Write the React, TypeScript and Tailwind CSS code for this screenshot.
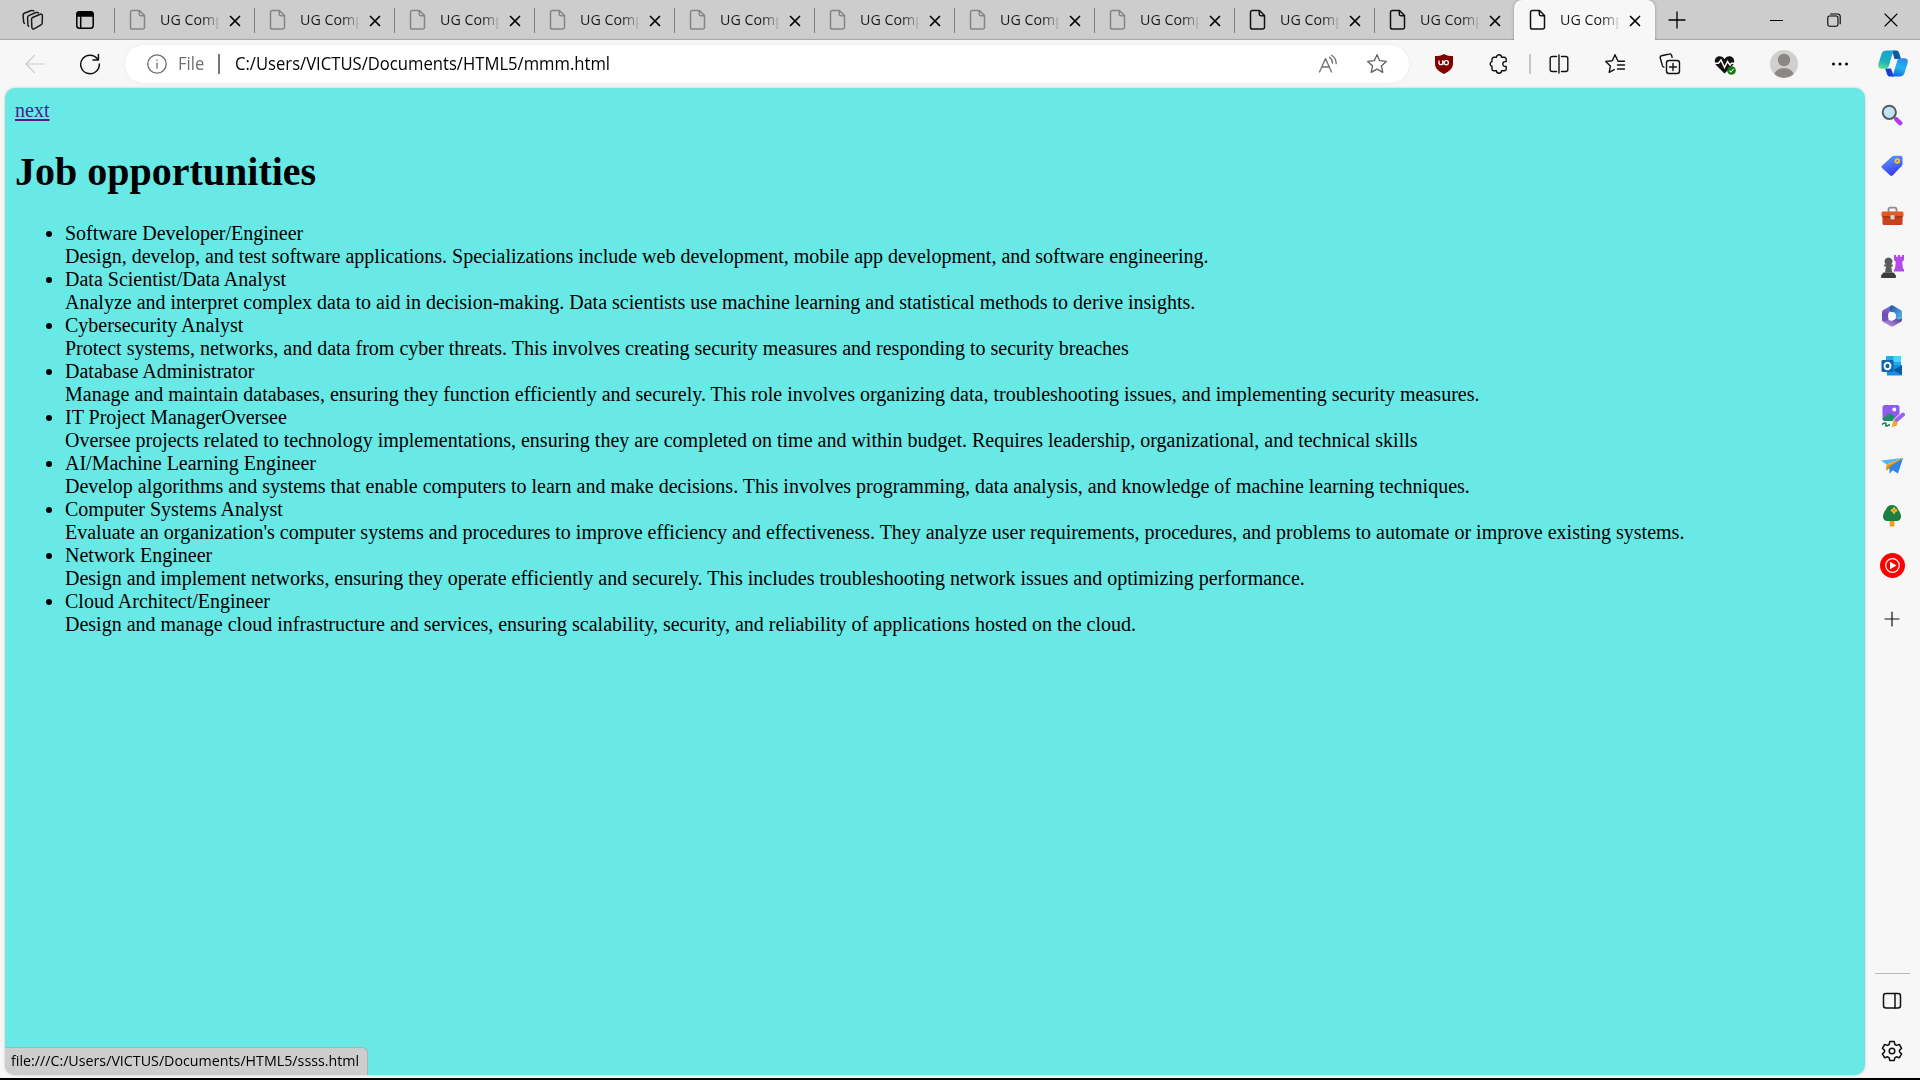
import React from "react";

const UI = "font-['Open_Sans','Noto_Sans',sans-serif]";

type IconProps = { w?: number; h?: number; className?: string; sw?: number; box?: string; children: React.ReactNode };

function Line({ w = 24, h = 24, className = "", sw = 1.3, box, children }: IconProps) {
  return (
    <svg width={w} height={h} viewBox={box ?? `0 0 ${w} ${h}`} fill="none" stroke="currentColor" strokeWidth={sw} strokeLinecap="round" strokeLinejoin="round" className={`shrink-0 ${className}`}>
      {children}
    </svg>
  );
}

function Art({ w = 24, h = 24, className = "", box, children }: IconProps) {
  return (
    <svg width={w} height={h} viewBox={box ?? `0 0 ${w} ${h}`} className={`shrink-0 ${className}`}>
      {children}
    </svg>
  );
}

function PageIcon({ className = "" }: { className?: string }) {
  return (
    <Line w={18} h={22} sw={1.5} className={className}>
      <path d="M3.5 1.5h7l5 5v11.7a1.8 1.8 0 0 1-1.8 1.8H3.3a1.8 1.8 0 0 1-1.8-1.8V3.3a1.8 1.8 0 0 1 1.8-1.8zM10.3 1.7v3.6a1.4 1.4 0 0 0 1.4 1.4h3.7" />
    </Line>
  );
}

function Tab({ tone, active = false }: { tone: string; active?: boolean }) {
  return (
    <div className={`flex h-10 shrink-0 items-center ${active ? "relative z-10 w-[141px] rounded-t-lg bg-[#f7f7f7] shadow-[0_0_3px_rgba(0,0,0,0.3)] [clip-path:inset(-4px_-4px_0_-4px)]" : "w-[140px]"}`}>
      <div className={`h-[25px] w-px ${active ? "" : "bg-[#7d7d7d]"}`} />
      <PageIcon className={`ml-[14px] ${tone}`} />
      <div className="mb-[2px] ml-[13px] w-[59px] text-[15px] leading-5 whitespace-nowrap text-[#1b1b1b] [mask-image:linear-gradient(to_right,black_42px,transparent_61px)]">
        <span className="inline-block origin-left scale-x-[0.95]">UG Comp</span>
      </div>
      <Line w={12} h={12} sw={1.7} className="ml-[10px] mt-[1px] text-black">
        <path d="M1.5 1.5l9 9M10.5 1.5l-9 9" />
      </Line>
    </div>
  );
}

function Cell({ w, children }: { w: string; children?: React.ReactNode }) {
  return <div className={`flex h-full shrink-0 items-center justify-center ${w}`}>{children}</div>;
}

function TabStrip() {
  const tones = Array.from({ length: 10 }, (_, i) => (i < 8 ? "text-[#858585]" : "text-[#111111]"));
  return (
    <div className="flex h-10 items-center bg-[#cdcdcd] shadow-[inset_0_-2px_1px_-1px_rgba(0,0,0,0.2)]">
      <Cell w="w-[65px]">
        <Line w={22} h={22} sw={1.5} className="text-[#1b1b1b]">
          <path d="M10.6 8.5l7.6-3.3a1.5 1.5 0 0 1 2.2 1.4l-.2 7.4a2 2 0 0 1-1.2 1.8l-7 4a1.4 1.4 0 0 1-2.1-1.2l-.4-8a2.3 2.3 0 0 1 1.1-2.1z" />
          <path d="M16.5 3.8l-1.6-.3a3 3 0 0 0-1.8.2L6.8 6.6a2 2 0 0 0-1.2 1.9l.3 7.2a2 2 0 0 0 .8 1.6" />
          <path d="M11.8 1.7l-1.6-.2a3 3 0 0 0-1.6.2L2.3 4.3a2 2 0 0 0-1.2 1.9l.5 6.7a2 2 0 0 0 .9 1.500" />
        </Line>
      </Cell>
      <Cell w="w-[40px]">
        <Line w={18} h={18} sw={1.5} className="text-black">
          <rect x="0.8" y="0.8" width="16.4" height="16.4" rx="2.8" />
          <path d="M1 3.2A2 2 0 0 1 3.2 1h11.6A2 2 0 0 1 17 3.2V5H1z" fill="currentColor" />
          <path d="M4.7 5v12" />
        </Line>
      </Cell>
      <div className="w-[9px]" />
      {tones.map((t, i) => (
        <Tab key={i} tone={t} />
      ))}
      <Tab active tone="text-[#111111]" />
      <Cell w="w-[44px]">
        <Line w={18} h={18} sw={1.3} className="text-black"><path d="M9 1v16M1 9h16" /></Line>
      </Cell>
      <div className="grow" />
      <Cell w="w-[57px]"><div className="h-px w-[13px] bg-black" /></Cell>
      <Cell w="w-[57px]">
        <Line w={14} h={14} sw={1.1} className="text-black">
          <rect x="0.8" y="3" width="10.2" height="10.2" rx="1.6" />
          <path d="M3.5 1h7.3a2.4 2.4 0 0 1 2.4 2.4v7.3" />
        </Line>
      </Cell>
      <Cell w="w-[58px]">
        <Line w={14} h={14} sw={1.1} className="text-black"><path d="M1 1l12 12M13 1L1 13" /></Line>
      </Cell>
    </div>
  );
}

const STAR = "M11 1.7l2.7 6 6.6.7-4.9 4.5 1.4 6.5L11 16.1l-5.800 3.300 1.400-6.500L1.700 8.400l6.600-.7z";

function Toolbar() {
  return (
    <div className="flex h-12 items-center text-[#111111]">
      <Cell w="w-[70px]">
        <Line w={20} h={20} sw={1.2} className="text-[#cbcbcb]"><path d="M19 10H1M9.5 1.5L1 10l8.5 8.5" /></Line>
      </Cell>
      <Cell w="w-[40px]">
        <Line w={22} h={22} sw={1.5}><path d="M18.7 6.2A9.3 9.3 0 1 0 20.3 11M19.4 1.5v5.4h-5.4" /></Line>
      </Cell>
      <div className="ml-[15px] flex h-[38px] w-[1284px] shrink-0 items-center rounded-full bg-white shadow-[0_0_4px_rgba(0,0,0,0.06)]">
        <Line w={20} h={20} sw={1.3} className="ml-[22px] text-[#6f6f6f]">
          <circle cx="10" cy="10" r="9.2" />
          <path d="M10 9.2v5M10 6v.3" />
        </Line>
        <span className="mb-px ml-[11px] w-[40px] text-[17.5px] text-[#6f6f6f]"><span className="inline-block origin-left scale-x-[0.95]">File</span></span>
        <div className="h-5 w-[1.5px] bg-[#777777]" />
        <span className="mb-px ml-[15px] whitespace-nowrap text-[17.5px] text-black"><span className="inline-block origin-left scale-x-[0.951]">C:/Users/VICTUS/Documents/HTML5/mmm.html</span></span>
        <div className="grow" />
        <Line w={20} h={20} sw={1.3} className="text-[#707070]">
          <path d="M1.5 18L7.5 4.5 13.5 18M3.800 13h7.400M11.500 3.300a7.500 7.500 0 0 1 3 6M13.500 1.200a10 10 0 0 1 4.700 8.500" />
        </Line>
        <Line w={22} h={22} sw={1.3} className="mr-[21px] ml-[28px] text-[#606060]"><path d={STAR} /></Line>
      </div>
      <Cell w="w-[70px]">
        <Art w={20} h={22}>
          <path d="M10 1C7.5 2.8 4 3 1 3v8c0 4.500 4 7.500 9 10 5-2.500 9-5.500 9-10V3c-3 0-6.500-.2-9-2z" fill="#800000" />
          <path d="M5 7.500v2.300a1.900 1.900 0 0 0 3.800 0V7.500" fill="none" stroke="#fff" strokeWidth="1.3" />
          <path d="M8.800 7.500v4.200" stroke="#fff" strokeWidth="1.3" />
          <circle cx="12.3" cy="9.7" r="2.1" fill="none" stroke="#fff" strokeWidth="1.3" />
        </Art>
      </Cell>
      <Cell w="w-[40px]">
        <Line w={20} h={20} sw={1.4}>
          <path d="M5 3.300h2.500a2.500 2.500 0 0 1 5 0h2.700a2 2 0 0 1 2 2v2.300h-1a2.400 2.400 0 0 0 0 4.800h1v2.400a2 2 0 0 1-2 2h-2.700a2.500 2.500 0 0 1-5 0H5a2 2 0 0 1-2-2v-2.400a2.500 2.500 0 0 1 0-4.800V5.300a2 2 0 0 1 2-2z" />
        </Line>
      </Cell>
      <div className="mx-[10px] h-5 w-[1.5px] bg-[#c8c8c8]" />
      <Cell w="w-[37px]">
        <Line w={20} h={20} sw={1.4}>
          <path d="M7.500 2.500H3.200a2 2 0 0 0-2 2v11a2 2 0 0 0 2 2h4.300M12.500 2.500h4.300a2 2 0 0 1 2 2v11a2 2 0 0 1-2 2h-4.300M10 1v18" />
        </Line>
      </Cell>
      <Cell w="w-[74px]">
        <Line w={22} h={22} sw={1.4}>
          <path d="M20.500 8.300h-6.500L11 1.700 8.300 7.700l-6.600.7 4.700 4.500-1.200 6.500 5-2.800M13.500 12h7M13.500 16h7" />
        </Line>
      </Cell>
      <Cell w="w-[36px]">
        <Line w={22} h={22} sw={1.4}>
          <rect x="7.5" y="7.5" width="13" height="13" rx="2.5" />
          <path d="M14 10.500v7M10.500 14h7M4.800 14.200a2 2 0 0 1-1.300-1.300L1.300 5.200a2 2 0 0 1 1.300-2.500L10.200 1a2 2 0 0 1 2.400 1.300l.5 2" />
        </Line>
      </Cell>
      <Cell w="w-[75px]">
        <Art w={22} h={20} className="mt-[2px]">
          <path d="M10.500 18.500L2 10C-.5 6.500 1 1.200 5.500 1.200c2.500 0 4 1.300 5 3 1-1.700 2.500-3 5-3C20 1.200 21.500 6.500 19 10z" fill="#111" />
          <path d="M0 8.300h4.500L7 5l3.500 7.500 3-6 2.500 3.500 1.500-1.700H22" fill="none" stroke="#f7f7f7" strokeWidth="1.5" />
          <circle cx="17.500" cy="15.500" r="4.300" fill="#107c10" />
          <path d="M15.500 15.700l1.400 1.300 2.700-3" fill="none" stroke="#fff" strokeWidth="1.1" />
        </Art>
      </Cell>
      <Cell w="w-[43px]">
        <Art w={28} h={28}>
          <circle cx="14" cy="14" r="14" fill="#d2d0ce" />
          <circle cx="14" cy="10" r="6.2" fill="#8a8785" />
          <path d="M4.500 24a9.600 7 0 0 1 19 0 14 14 0 0 1-19 0z" fill="#8a8785" />
        </Art>
      </Cell>
      <Cell w="w-[69px]">
        <Art w={18} h={4}>
          <circle cx="2.5" cy="2" r="1.5" /><circle cx="9" cy="2" r="1.5" /><circle cx="15.5" cy="2" r="1.5" />
        </Art>
      </Cell>
      <Cell w="w-[36px]">
        <Art w={30} h={27} className="mb-px">
          <defs>
            <linearGradient id="cpA" x1="0.5" y1="0" x2="0.2" y2="1"><stop offset="0" stopColor="#16a3d6" /><stop offset="0.6" stopColor="#1fb0b8" /><stop offset="1" stopColor="#5fe08a" /></linearGradient>
            <linearGradient id="cpB" x1="0.7" y1="0" x2="0.3" y2="1"><stop offset="0" stopColor="#2c8be8" /><stop offset="0.5" stopColor="#22b4f2" /><stop offset="1" stopColor="#1566e0" /></linearGradient>
          </defs>
          <path d="M14 .5h4c2.500 0 3 1.500 3.700 4L23 9h-6.500z" fill="#0f5a9e" />
          <path d="M7 18.500h6l3 8h-4c-2.500 0-3-2-3.500-4z" fill="#1a3fd0" />
          <path d="M8.500.5h9c-2 .5-2.700 2-3.300 4L11 15.500c-.6 2-1.800 3.200-4 3.200H3.500C.8 18.700-.3 16.800.4 14L3.300 4.500C4 2 5.700.5 8.500.5z" fill="url(#cpA)" />
          <path d="M21.500 26.500h-9c2-.5 2.700-2 3.300-4L19 11.500c.6-2 1.800-3.200 4-3.200h3.500c2.700 0 3.800 1.900 3.100 4.700l-2.900 9.500c-.7 2.500-2.400 4-5.200 4z" fill="url(#cpB)" />
        </Art>
      </Cell>
    </div>
  );
}

const jobs: [string, string][] = [
  ["Software Developer/Engineer", "Design, develop, and test software applications. Specializations include web development, mobile app development, and software engineering."],
  ["Data Scientist/Data Analyst", "Analyze and interpret complex data to aid in decision-making. Data scientists use machine learning and statistical methods to derive insights."],
  ["Cybersecurity Analyst", "Protect systems, networks, and data from cyber threats. This involves creating security measures and responding to security breaches"],
  ["Database Administrator", "Manage and maintain databases, ensuring they function efficiently and securely. This role involves organizing data, troubleshooting issues, and implementing security measures."],
  ["IT Project ManagerOversee", "Oversee projects related to technology implementations, ensuring they are completed on time and within budget. Requires leadership, organizational, and technical skills"],
  ["AI/Machine Learning Engineer", "Develop algorithms and systems that enable computers to learn and make decisions. This involves programming, data analysis, and knowledge of machine learning techniques."],
  ["Computer Systems Analyst", "Evaluate an organization's computer systems and procedures to improve efficiency and effectiveness. They analyze user requirements, procedures, and problems to automate or improve existing systems."],
  ["Network Engineer", "Design and implement networks, ensuring they operate efficiently and securely. This includes troubleshooting network issues and optimizing performance."],
  ["Cloud Architect/Engineer", "Design and manage cloud infrastructure and services, ensuring scalability, security, and reliability of applications hosted on the cloud."],
];

function Document() {
  return (
    <main className="relative h-[987px] w-[1860px] overflow-hidden rounded-[10px] bg-[#69e9e6] px-[10px] pt-[11px] font-['Liberation_Serif',serif] text-[20px] leading-[23px] text-black shadow-[0_0_3px_rgba(0,0,0,0.2)]">
      <a className="block w-fit text-[#551a8b] underline decoration-2 underline-offset-2">next</a>
      <h1 className="mt-[27px] text-[40px] leading-[46px] font-bold">Job opportunities</h1>
      <ul className="mt-[27px] list-disc pl-[50px] whitespace-nowrap">
        {jobs.map(([title, text]) => (
          <li key={title}>{title}<br />{text}</li>
        ))}
      </ul>
      <div className={`absolute bottom-0 left-0 flex h-[28px] w-[363px] items-center rounded-tr-md border-t border-r border-[#a9b5b5] bg-[#cdcdcd] pb-[2px] pl-[6px] text-[15px] whitespace-nowrap text-black ${UI}`}>
        <span className="inline-block origin-left scale-x-[0.95]">file:///C:/Users/VICTUS/Documents/HTML5/ssss.html</span>
      </div>
    </main>
  );
}

const apps: React.ReactNode[] = [
  <Art w={22} h={22} className="mb-[2px]">
    <path d="M13 13l7 7" stroke="#8b8b8b" strokeWidth="3" />
    <path d="M15.500 15.500l3.600 3.600" stroke="#b638ee" strokeWidth="4.500" strokeLinecap="round" />
    <circle cx="8.3" cy="8.3" r="6.6" fill="#bfe3fa" stroke="#5b5b5b" strokeWidth="2" />
  </Art>,
  <Art w={22} h={22}>
    <defs><linearGradient id="tag" x1="0" y1="0" x2="0.3" y2="1"><stop stopColor="#5fa0ff" /><stop offset="1" stopColor="#3a3ff0" /></linearGradient></defs>
    <path d="M13 .8h6.500a2 2 0 0 1 2 2V9c0 1-.3 1.600-1 2.300l-8.700 9a2 2 0 0 1-2.800 0L1 12.900a1.500 1.500 0 0 1 0-2.200L10.500 2c.8-.8 1.500-1.200 2.500-1.200z" fill="url(#tag)" />
    <circle cx="16.3" cy="6" r="1.9" fill="#6580a8" stroke="#ffc820" strokeWidth="1.7" />
  </Art>,
  <Art w={23} h={20}>
    <path d="M7.500 6V3.500A1.800 1.800 0 0 1 9.300 1.700h4.400a1.800 1.800 0 0 1 1.800 1.800V6" fill="none" stroke="#8c8c8c" strokeWidth="1.8" />
    <rect x="1.5" y="7" width="20" height="12" rx="1.5" fill="#c8401c" />
    <rect x="0.5" y="5.5" width="22" height="5.5" rx="1.5" fill="#e35a22" />
    <rect x="1.5" y="10.3" width="20" height="1.2" fill="#8d2c12" />
    <rect x="9.5" y="9" width="4" height="4.5" rx="1.2" fill="#d4d4d4" />
  </Art>,
  <Art w={23} h={24} className="mb-px">
    <path d="M13 1h2v1.800h1.800V1h2.400v1.800H21V1h2v5l-1.800 2 .8 6.500 1 1v2H13v-2l1-1 .8-6.500L13 6z" fill="#b44be8" />
    <path d="M7.500 3.500a4 4 0 0 1 2.700 7h1.600v2h-1.600l1 6H4l1-6H3.200v-2h1.600a4 4 0 0 1 2.700-7z" fill="#5a5a5a" />
    <path d="M2.500 18.500h10l2.500 3v1.500a1 1 0 0 1-1 1H1a1 1 0 0 1-1-1v-1.500z" fill="#3d3d3d" />
  </Art>,
  <Art w={22} h={22}>
    <defs>
      <linearGradient id="mA" x1="0" y1="0" x2="0" y2="1"><stop stopColor="#6f86d8" /><stop offset="0.5" stopColor="#7a48b4" /><stop offset="1" stopColor="#5a62b8" /></linearGradient>
      <linearGradient id="mB" x1="0" y1="0" x2="1" y2="1"><stop stopColor="#24508f" /><stop offset="0.5" stopColor="#3f86d0" /><stop offset="1" stopColor="#5cc4f4" /></linearGradient>
      <linearGradient id="mC" x1="1" y1="0" x2="0" y2="0.600"><stop stopColor="#3f3f86" /><stop offset="0.500" stopColor="#8a66c0" /><stop offset="1" stopColor="#c090e4" /></linearGradient>
    </defs>
    <path d="M10 .6a3 3 0 0 1 2 .1L7.500 8.500V15c0 2.500-4 3.500-6.500.500V7a2 2 0 0 1 1-1.700z" fill="url(#mA)" />
    <path d="M10.500.4a3 3 0 0 1 1.800.4L20 5.300A2 2 0 0 1 21 7v7.500c-1 1.500-4 1.500-6.300-.5V9.500L9.500 6.800C8 5 8.500 1.500 10.500.4z" fill="url(#mB)" />
    <path d="M21 13.500V15a2 2 0 0 1-1 1.700l-7.700 4.600a2.500 2.500 0 0 1-2.600 0L2 16.900a2 2 0 0 1-1-1.700c2 1.500 4.500 1.300 6.500-.2L11 16l4-2.500c2 1.200 4.500 1.200 6 0z" fill="url(#mC)" />
    <circle cx="11" cy="11" r="3.900" fill="#fafafa" />
  </Art>,
  <Art w={22} h={22}>
    <rect x="5" y="1" width="15" height="13" rx="1" fill="#28a8ea" />
    <path d="M12.500 1h6.500a1 1 0 0 1 1 1v5h-7.500z" fill="#50d0ff" />
    <path d="M5 10l16 0v9.500a1 1 0 0 1-1 1H6z" fill="#1490df" />
    <path d="M21 10.500v9.500L12 15z" fill="#0a5a9c" />
    <rect x="0.5" y="5" width="12" height="12" rx="1.2" fill="#0f64b5" />
    <ellipse cx="6.5" cy="11" rx="3" ry="3.3" fill="none" stroke="#fff" strokeWidth="1.9" />
  </Art>,
  <Art w={24} h={24} className="ml-[2px]">
    <rect x="1.5" y="1" width="17" height="16" rx="2.5" fill="#8e5bea" />
    <path d="M1.500 15l6-5c1-.8 2-.8 3 0l6 5.500c-.8 1-1.500 1.500-3 1.500H4a2.500 2.500 0 0 1-2.500-2z" fill="#1b9062" />
    <circle cx="13.3" cy="5.5" r="1.9" fill="#fff" />
    <path d="M22 10.500L14.500 17" stroke="#f7f7f7" strokeWidth="5.400" strokeLinecap="round" />
    <path d="M22 10.500L14.500 17" stroke="#9a62f2" strokeWidth="4" strokeLinecap="round" />
    <path d="M13.500 16l3 3c0 3-2.500 4-6.500 3.800 1.500-1 1-4 3.500-6.800z" fill="#f4a52a" />
    <path d="M1 20.500c2-1.500 3.500-2 4-1s-1 2 0 2.500 2-1 4-1.200" fill="none" stroke="#157a54" strokeWidth="1.5" />
  </Art>,
  <Art w={23} h={18}>
    <path d="M22 1L0 3.500l5.500 4z" fill="#55b4f6" />
    <path d="M22 1L5.500 7.500 5 13.500l3-3z" fill="#f1a51f" />
    <path d="M5 13.500l1-4L22 1 9.500 11z" fill="#e08a12" />
    <path d="M22 1l-5 15.500-5.300-3.200-3.200 3.500V10z" fill="#2c86e8" />
  </Art>,
  <Art w={20} h={24}>
    <rect x="7.7" y="15" width="4.8" height="7.5" rx="1" fill="#eda01c" />
    <path d="M10 1c3 0 5.200 1.500 6 4.500 1.800 2 3 4.500 3 7 0 3-2 4.500-4.500 4.500h-9C3 17 1 15.500 1 12.500c0-2.500 1.200-5 3-7C4.800 2.500 7 1 10 1z" fill="#1c7f42" />
    <path d="M12 4.500v4M10 6.500h4" stroke="#ffc02a" strokeWidth="2.6" strokeLinecap="round" />
    <circle cx="12" cy="6.5" r="1.1" fill="#d8801a" />
  </Art>,
  <Art w={25} h={25} className="mb-px">
    <circle cx="12.5" cy="12.5" r="12.5" fill="#f00" />
    <circle cx="12.5" cy="12.5" r="6.8" fill="none" stroke="#fff" strokeWidth="1.2" />
    <path d="M10 8.800l6.500 3.700-6.500 3.700z" fill="#fff" />
  </Art>,
];

const GEAR =
  "M8.800 1.500h4.400l.7 3 1.500.9 3-.9 2.200 3.800-2.200 2.100v1.400l2.200 2.100-2.200 3.800-3-.9-1.500.9-.7 2.800H8.800l-.7-2.800-1.500-.9-3 .9-2.200-3.800 2.200-2.100v-1.400L1.400 8.300l2.200-3.800 3 .9 1.500-.9z";

function Sidebar() {
  return (
    <aside className="flex w-[54px] flex-col items-center pt-[3px] text-[#111111]">
      {apps.map((a, i) => (
        <div key={i} className="flex h-[50px] items-center justify-center">{a}</div>
      ))}
      <Line w={16} h={16} sw={1.2} className="mt-[20px]"><path d="M8 1v14M1 8h14" /></Line>
      <div className="mt-auto h-px w-[35px] bg-[#b9b9b9]" />
      <Line w={20} h={18} sw={1.5} className="mt-[18px]">
        <rect x="1.5" y="1.5" width="17" height="14.5" rx="2.5" />
        <path d="M13 1.500v14.500" />
      </Line>
      <Line w={22} h={22} sw={1.5} className="mt-[30px] mb-[16px]">
        <path d={GEAR} />
        <circle cx="11" cy="11" r="2.8" />
      </Line>
    </aside>
  );
}

export default function App() {
  return (
    <div className={`flex h-[1080px] w-[1920px] flex-col overflow-hidden border-b-2 border-black bg-[#f7f7f7] ${UI}`}>
      <TabStrip />
      <Toolbar />
      <div className="flex h-[990px] pl-[5px]">
        <Document />
        <Sidebar />
      </div>
    </div>
  );
}
